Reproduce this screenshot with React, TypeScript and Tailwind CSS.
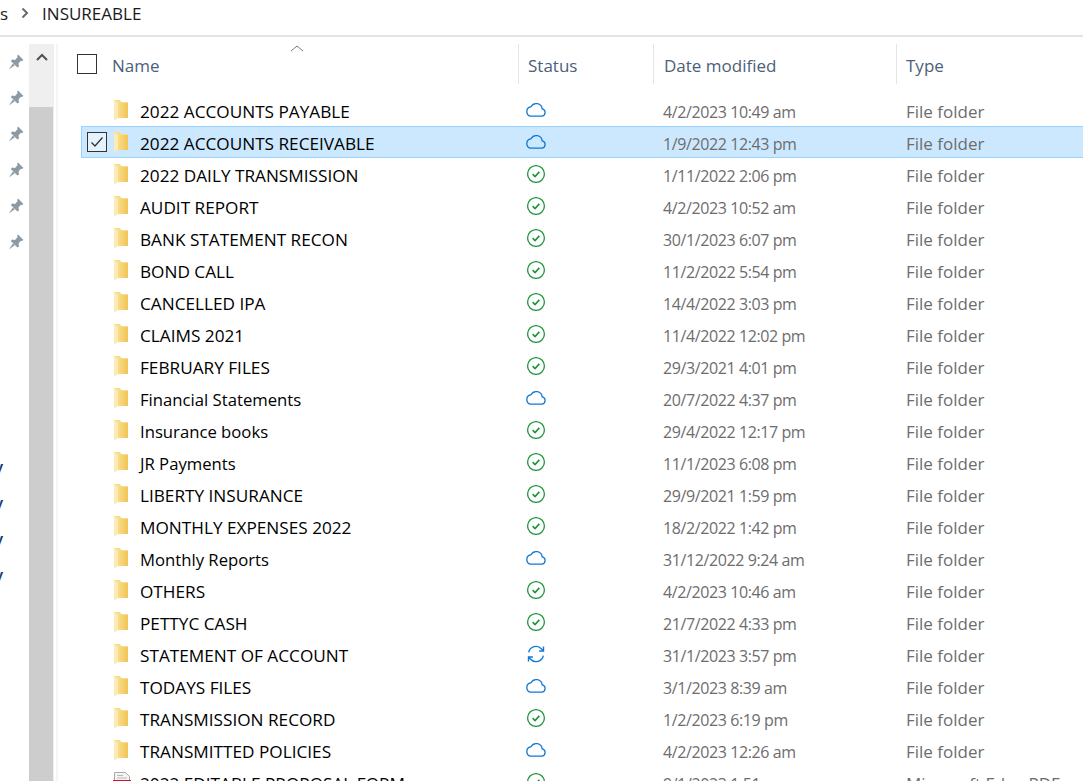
import React from 'react';

type Status = 'cloud' | 'ok' | 'sync';

interface Item {
  name: string;
  status: Status;
  date: string;
}

const items: Item[] = [
  { name: '2022 ACCOUNTS PAYABLE', status: 'cloud', date: '4/2/2023 10:49 am' },
  { name: '2022 ACCOUNTS RECEIVABLE', status: 'cloud', date: '1/9/2022 12:43 pm' },
  { name: '2022 DAILY TRANSMISSION', status: 'ok', date: '1/11/2022 2:06 pm' },
  { name: 'AUDIT REPORT', status: 'ok', date: '4/2/2023 10:52 am' },
  { name: 'BANK STATEMENT RECON', status: 'ok', date: '30/1/2023 6:07 pm' },
  { name: 'BOND CALL', status: 'ok', date: '11/2/2022 5:54 pm' },
  { name: 'CANCELLED IPA', status: 'ok', date: '14/4/2022 3:03 pm' },
  { name: 'CLAIMS 2021', status: 'ok', date: '11/4/2022 12:02 pm' },
  { name: 'FEBRUARY FILES', status: 'ok', date: '29/3/2021 4:01 pm' },
  { name: 'Financial Statements', status: 'cloud', date: '20/7/2022 4:37 pm' },
  { name: 'Insurance books', status: 'ok', date: '29/4/2022 12:17 pm' },
  { name: 'JR Payments', status: 'ok', date: '11/1/2023 6:08 pm' },
  { name: 'LIBERTY INSURANCE', status: 'ok', date: '29/9/2021 1:59 pm' },
  { name: 'MONTHLY EXPENSES 2022', status: 'ok', date: '18/2/2022 1:42 pm' },
  { name: 'Monthly Reports', status: 'cloud', date: '31/12/2022 9:24 am' },
  { name: 'OTHERS', status: 'ok', date: '4/2/2023 10:46 am' },
  { name: 'PETTYC CASH', status: 'ok', date: '21/7/2022 4:33 pm' },
  { name: 'STATEMENT OF ACCOUNT', status: 'sync', date: '31/1/2023 3:57 pm' },
  { name: 'TODAYS FILES', status: 'cloud', date: '3/1/2023 8:39 am' },
  { name: 'TRANSMISSION RECORD', status: 'ok', date: '1/2/2023 6:19 pm' },
  { name: 'TRANSMITTED POLICIES', status: 'cloud', date: '4/2/2023 12:26 am' },
];

function FolderIcon() {
  return (
    <svg width="14" height="20" viewBox="0 0 14 20" className="shrink-0">
      <defs>
        <linearGradient id="pane" x1="0" y1="0" x2="1" y2="0">
          <stop offset="0" stopColor="#f9dd8a" />
          <stop offset="1" stopColor="#f1c457" />
        </linearGradient>
      </defs>
      <path d="M0 0h6l1.5 2H14v16H4V18L0 20z" fill="#f8dd8c" />
      <path d="M4 3h10v15H4z" fill="url(#pane)" />
      <path d="M0 0l4 3v15l-4 2z" fill="#fcecb4" />
    </svg>
  );
}

function PdfIcon() {
  return (
    <svg width="18" height="20" viewBox="0 0 18 20" className="shrink-0">
      <path d="M1.5 0.5h11l4 4v6h-15z" fill="#f4f4f4" stroke="#a8a8a8" />
      <path d="M4 3.5h6M4 6h10" stroke="#b8b8b8" />
      <rect x="0" y="8" width="18" height="10" fill="#d2112a" />
    </svg>
  );
}

function StatusIcon({ status }: { status: Status }) {
  if (status === 'ok') {
    return (
      <svg width="20" height="20" viewBox="0 0 20 20" fill="none">
        <circle cx="10" cy="10" r="8.4" stroke="#1e9438" strokeWidth="1.3" />
        <path d="M6.6 10.2l2.4 2.3 4.4-4.6" stroke="#1e9438" strokeWidth="1.6" />
      </svg>
    );
  }
  if (status === 'sync') {
    return (
      <svg width="20" height="20" viewBox="0 0 20 20" fill="none" stroke="#0f78d4" strokeWidth="1.4">
        <path d="M2.7 8.4A7.4 7.4 0 0 1 15.6 5L17.5 6.8" />
        <path d="M17.5 2.6v4.4h-4.4" />
        <path d="M17.3 11.6A7.4 7.4 0 0 1 4.4 15L2.5 13.2" />
        <path d="M2.5 17.4V13h4.4" />
      </svg>
    );
  }
  return (
    <svg width="20" height="20" viewBox="0 0 20 20" fill="none">
      <path
        d="M5 16.2h10.6a3.7 3.7 0 0 0 .6-7.3 6 6 0 0 0-11.2-2.2 .6 .6 0 0 1-.3.2A4.7 4.7 0 0 0 5 16.2z"
        stroke="#0f78d4"
        strokeWidth="1.3"
      />
    </svg>
  );
}

function PinIcon() {
  return (
    <svg width="16" height="16" viewBox="0 0 16 16" fill="#8d9aa3">
      <path d="M10 0.5L15.5 6L14 7L13 6.8L10.5 9.5L11 12.5L9.5 13.5L2.8 7L4 5.5L7 6L9.5 3.2L9.2 2z" />
      <path d="M5 9.5L6.8 11.3L0.8 15.5z" />
    </svg>
  );
}

function Row({ item, selected }: { item: Item; selected?: boolean }) {
  const isCaps = item.name === item.name.toUpperCase();
  return (
    <div
      className={`grid h-8 w-[1010px] grid-cols-[444px_137px_243px_1fr] items-center border ${
        selected ? 'border-[#99d1ff] bg-[#cce8ff]' : 'border-transparent'
      }`}
    >
      <div className="flex items-center">
        <div className="w-[32px] pl-[5px]">
          {selected && (
            <div className="flex h-5 w-5 items-center justify-center border border-[#333] bg-[#e4f2fd]">
              <svg width="14" height="12" viewBox="0 0 14 12" fill="none">
                <path d="M1.5 6.5l3.5 3.5 7.5-8.5" stroke="#333" strokeWidth="1.3" />
              </svg>
            </div>
          )}
        </div>
        <FolderIcon />
        <span className={`ml-[12px] whitespace-nowrap pt-1 text-black ${isCaps ? 'text-[17.2px]' : 'text-[16.7px]'}`}>
          {item.name}
        </span>
      </div>
      <div className="flex items-center">
        <StatusIcon status={item.status} />
      </div>
      <div className="whitespace-nowrap pt-1 text-[16px] tracking-[-0.4px] text-[#6d6d6d]">{item.date}</div>
      <div className="whitespace-nowrap pt-[2px] text-[#6d6d6d]">File folder</div>
    </div>
  );
}

export default function App() {
  return (
    <div className="flex h-[781px] w-[1083px] flex-col overflow-hidden bg-white font-['Open_Sans',sans-serif] text-[17px] leading-none">
      {/* Breadcrumb */}
      <div className="flex h-[37px] shrink-0 items-center border-b-2 border-[#e3e3e3] pb-[9px] text-[#1a1a1a]">
        <span>s</span>
        <svg width="10" height="12" viewBox="0 0 10 12" className="ml-[12px]" fill="none">
          <path d="M2.5 1.5l4.5 4.5-4.5 4.5" stroke="#6b6b6b" strokeWidth="2" />
        </svg>
        <span className="ml-[12px]">INSUREABLE</span>
      </div>

      <div className="flex min-h-0 flex-1">
        {/* Nav pane edge */}
        <div className="flex w-[29px] shrink-0 flex-col">
          <div className="flex flex-col gap-5 pl-2 pt-[17px]">
            {[0, 1, 2, 3, 4, 5].map((i) => (
              <PinIcon key={i} />
            ))}
          </div>
          <div className="mt-[208px] flex flex-col gap-[20px] overflow-hidden">
            {[0, 1, 2, 3].map((i) => (
              <div key={i} className="-ml-[6px] h-4 font-semibold text-[#1a3d70]">
                y
              </div>
            ))}
          </div>
        </div>

        {/* Scrollbar */}
        <div className="mt-[7px] flex w-[25px] shrink-0 flex-col bg-[#efefef]">
          <div className="flex h-[63px] shrink-0 justify-center pt-[8px]">
            <svg width="14" height="10" viewBox="0 0 14 10" fill="none">
              <path d="M2 8l5-5 5 5" stroke="#505050" strokeWidth="2" />
            </svg>
          </div>
          <div className="mr-px flex-1 bg-[#cdcdcd]" />
        </div>
        <div className="ml-[2px] mt-[7px] w-[2px] shrink-0 bg-[#f5f5f5]" />

        {/* File list */}
        <div className="ml-[19px] min-w-0 flex-1 overflow-hidden">
          <div className="relative h-[57px] text-[#4c607a]">
            <svg width="14" height="7" viewBox="0 0 14 7" className="absolute left-[213px] top-[8px]" fill="none">
              <path d="M1 6l6-5 6 5" stroke="#777" />
            </svg>
            <div className="grid grid-cols-[441px_135px_243px_1fr] items-center pt-[7px]">
              <div className="flex h-[40px] items-center">
                <div className="h-5 w-5 border border-[#333]" />
                <span className="ml-[15px] pt-[2px]">Name</span>
              </div>
              <div className="flex h-[40px] items-center border-l border-[#e5e5e5] pl-[9px] pt-[2px]">Status</div>
              <div className="flex h-[40px] items-center border-l border-[#e5e5e5] pl-[10px] pt-[2px]">Date modified</div>
              <div className="flex h-[40px] items-center border-l border-[#e5e5e5] pl-[9px] pt-[2px]">Type</div>
            </div>
          </div>
          <div className="pl-1">
            {items.map((item, i) => (
              <Row key={item.name} item={item} selected={i === 1} />
            ))}
            <div className="grid h-8 w-[1010px] grid-cols-[444px_137px_243px_1fr] items-center border border-transparent">
              <div className="flex items-center">
                <div className="w-[31px]" />
                <PdfIcon />
                <span className="ml-[9px] whitespace-nowrap pt-1 text-[17.2px]">2022 EDITABLE PROPOSAL FORM</span>
              </div>
              <StatusIcon status="ok" />
              <div className="whitespace-nowrap pt-1 text-[16px] tracking-[-0.4px] text-[#6d6d6d]">9/1/2023 1:51 pm</div>
              <div className="whitespace-nowrap pt-[2px] text-[#6d6d6d]">Microsoft Edge PDF ...</div>
            </div>
          </div>
        </div>
      </div>
    </div>
  );
}
